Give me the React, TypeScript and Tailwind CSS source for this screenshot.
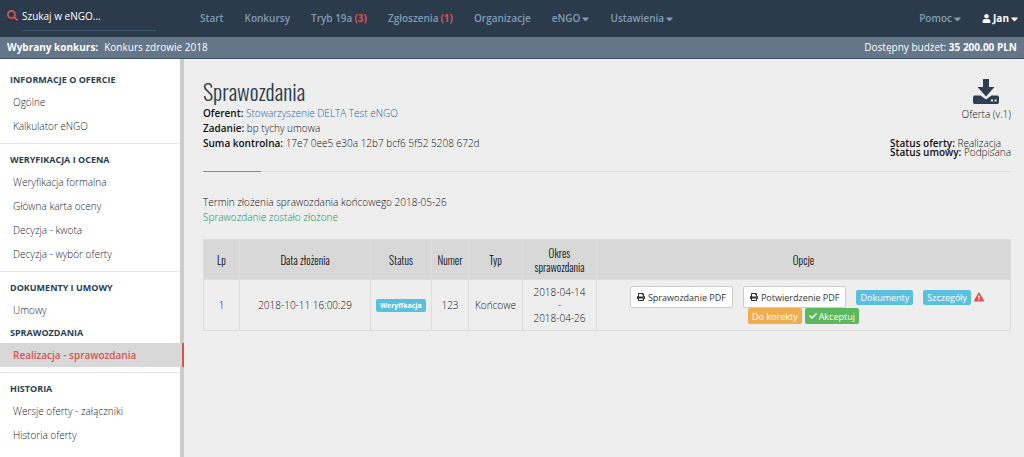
import { FaSearch, FaPrint, FaCheck, FaUser, FaCaretDown, FaExclamationTriangle } from 'react-icons/fa';

const navItems = [
  { label: 'Start' },
  { label: 'Konkursy' },
  { label: 'Tryb 19a', count: 3 },
  { label: 'Zgłoszenia', count: 1 },
  { label: 'Organizacje' },
  { label: 'eNGO', dropdown: true },
  { label: 'Ustawienia', dropdown: true }
];

const sidebarSections = [
  {
    groups: [{ title: 'Informacje o ofercie', items: ['Ogólne', 'Kalkulator eNGO'] }]
  },
  {
    groups: [
      {
        title: 'Weryfikacja i ocena',
        items: ['Weryfikacja formalna', 'Główna karta oceny', 'Decyzja - kwota', 'Decyzja - wybór oferty']
      }
    ]
  },
  {
    groups: [
      { title: 'Dokumenty i umowy', items: ['Umowy'] },
      { title: 'Sprawozdania', items: ['Realizacja - sprawozdania'] }
    ]
  },
  {
    groups: [{ title: 'Historia', items: ['Wersje oferty - załączniki', 'Historia oferty'] }]
  }
];

const activeItem = 'Realizacja - sprawozdania';

const reports = [
  {
    lp: 1,
    submitted: '2018-10-11 16:00:29',
    status: 'Weryfikacja',
    number: 123,
    type: 'Końcowe',
    from: '2018-04-14',
    to: '2018-04-26'
  }
];

const DownloadIcon = () => (
  <svg viewBox="0 0 26 25" className="w-[26px] h-[25px]" fill="currentColor" aria-hidden="true">
    <path d="M10 0h6v8h5.500l-8.500 9.500L4.500 8H10z" />
    <path
      fillRule="evenodd"
      d="M1 16.500h6.500l5.500 4 5.500-4H25L26 18V23.500L25 25H1L0 23.500V18zM18 20.500v2h2v-2zM21.500 20.500v2h2v-2z"
    />
  </svg>
);

const Header = () => (
  <header className="bg-[#2c3b4b] h-[37px] flex items-center">
    <form className="w-[184px] h-full shrink-0 pl-[7px] flex items-center gap-1" role="search">
      <FaSearch className="w-[11px] h-[11px] mb-1.5 text-[#d9534f]" />
      <input
        type="text"
        aria-label="Szukaj"
        placeholder="Szukaj w eNGO..."
        className="w-[134px] h-6 pb-1 text-[10px] font-medium text-white placeholder:text-white placeholder:opacity-100 border-b border-[#3d566e] outline-none"
      />
    </form>
    <nav className="flex-1 flex items-center pl-4 pr-[6px] gap-[21px] text-[10px] font-semibold text-[#7f9bb5]">
      {navItems.map((item) => (
        <a key={item.label} href="#" className="flex items-center gap-0.5 whitespace-nowrap">
          {item.label}
          {item.count && <span className="text-[#d9534f] font-bold">({item.count})</span>}
          {item.dropdown && <FaCaretDown className="w-[7px] h-3" />}
        </a>
      ))}
      <a href="#" className="ml-auto flex items-center gap-0.5">
        Pomoc
        <FaCaretDown className="w-[7px] h-3" />
      </a>
      <a href="#" className="flex items-center gap-0.5 text-white font-bold">
        <FaUser className="w-[9px] h-[9px]" />
        Jan
        <FaCaretDown className="w-[7px] h-3" />
      </a>
    </nav>
  </header>
);

const Sidebar = () => (
  <aside className="w-[184px] shrink-0 bg-white border-r-4 border-[#cccccc] pt-[5px]">
    {sidebarSections.map((section, index) => (
      <div key={index} className="pt-[5px] pb-[5px] border-b border-[#e5e5e5] last:border-b-0">
        {section.groups.map((group) => (
          <div key={group.title}>
            <h2 className="h-[21px] pl-[10px] flex items-center text-[9px] font-bold uppercase text-[#2c3e50]">
              {group.title}
            </h2>
            <ul>
              {group.items.map((item) => (
                <li key={item}>
                  <a
                    href="#"
                    className={
                      item === activeItem
                        ? 'h-6 pl-[13px] -mr-1 flex items-center bg-[#d8d8d8] border-r-2 border-[#d9534f] font-semibold text-[#d9534f]'
                        : 'h-6 pl-[13px] flex items-center text-[#1a242e]'
                    }
                  >
                    {item}
                  </a>
                </li>
              ))}
            </ul>
          </div>
        ))}
      </div>
    ))}
  </aside>
);

const ReportsTable = () => (
  <table className="w-full table-fixed border-collapse border border-[#dddddd] text-center">
    <colgroup>
      <col className="w-9" />
      <col className="w-[131px]" />
      <col className="w-[61px]" />
      <col className="w-[37px]" />
      <col className="w-[54px]" />
      <col className="w-[74px]" />
      <col />
    </colgroup>
    <thead className="bg-[#d8d8d8] font-['Oswald','Liberation_Sans_Narrow',sans-serif] leading-[14px]">
      <tr className="h-10">
        {['Lp', 'Data złożenia', 'Status', 'Numer', 'Typ', 'Okres sprawozdania', 'Opcje'].map((label) => (
          <th key={label} scope="col" className="px-1 text-[11px] font-light border-r border-[#dddddd]">
            {label}
          </th>
        ))}
      </tr>
    </thead>
    <tbody>
      {reports.map((report) => (
        <tr key={report.lp} className="h-[51px] leading-[13px] *:border *:border-[#dddddd]">
          <td>{report.lp}</td>
          <td>{report.submitted}</td>
          <td>
            <span className="inline-block px-1 rounded-xs bg-[#5bc0de] text-[7px] font-bold text-white">
              {report.status}
            </span>
          </td>
          <td>{report.number}</td>
          <td>{report.type}</td>
          <td>
            {report.from}
            <br />-<br />
            {report.to}
          </td>
          <td className="text-[9px] font-normal">
            <div className="flex items-center justify-center gap-[10px] pl-[7px]">
              <button className="h-[22px] px-[6px] flex items-center gap-[3px] rounded-xs border border-[#cccccc] bg-white text-[#333333]">
                <FaPrint className="w-2 h-2" />
                Sprawozdanie PDF
              </button>
              <button className="h-[22px] px-[6px] flex items-center gap-[3px] rounded-xs border border-[#cccccc] bg-white text-[#333333]">
                <FaPrint className="w-2 h-2" />
                Potwierdzenie PDF
              </button>
              <button className="h-[15px] px-1 flex items-center rounded-xs bg-[#5bc0de] text-white">Dokumenty</button>
              <div className="flex items-center gap-[3px]">
                <button className="h-[15px] px-1 flex items-center rounded-xs bg-[#5bc0de] text-white">Szczegóły</button>
                <FaExclamationTriangle className="w-[10px] h-[10px] text-[#d9534f]" />
              </div>
            </div>
            <div className="flex justify-center gap-[3px]">
              <button className="h-4 px-1 flex items-center rounded-xs bg-[#f0ad4e] text-white">Do korekty</button>
              <button className="h-4 px-1 flex items-center gap-0.5 rounded-xs bg-[#5cb85c] text-white">
                <FaCheck className="w-2 h-2" />
                Akceptuj
              </button>
            </div>
          </td>
        </tr>
      ))}
    </tbody>
  </table>
);

const App = () => {
  return (
    <div className="min-h-screen flex flex-col bg-[#eeeeee] font-['Open_Sans',sans-serif] text-[10px] font-light text-[#111111]">
      <Header />
      <div className="h-[22px] px-[7px] flex items-center justify-between bg-[#647687] border-b border-[#3f5060] text-white">
        <p className="flex gap-[6px]">
          <strong className="font-bold">Wybrany konkurs:</strong>
          <span className="font-normal">Konkurs zdrowie 2018</span>
        </p>
        <p className="font-normal">
          Dostępny budżet: <strong className="font-bold">35 200.00 PLN</strong>
        </p>
      </div>

      <div className="flex-1 flex">
        <Sidebar />
        <main className="flex-1 pl-[19px] pr-[13px] pt-[18px]">
          <div className="flex justify-between">
            <div className="leading-[15px]">
              <h1 className="text-[22px] leading-[29px] font-light text-[#2c3e50] font-['Oswald','Liberation_Sans_Narrow',sans-serif]">
                Sprawozdania
              </h1>
              <p>
                <strong className="font-semibold">Oferent:</strong>{' '}
                <a href="#" className="text-[#1f64a5]">
                  Stowarzyszenie DELTA Test eNGO
                </a>
              </p>
              <p>
                <strong className="font-semibold">Zadanie:</strong> bp tychy umowa
              </p>
              <p>
                <strong className="font-semibold">Suma kontrolna:</strong> 17e7 0ee5 e30a 12b7 bcf6 5f52 5208 672d
              </p>
            </div>
            <div className="flex flex-col items-end pt-[2px]">
              <a href="#" className="flex flex-col items-center gap-[3px] leading-[15px]">
                <span className="text-[#2c3e50]">
                  <DownloadIcon />
                </span>
                Oferta (v.1)
              </a>
              <div className="mt-[17px] leading-[9px]">
                <p>
                  <strong className="font-semibold">Status oferty:</strong> Realizacja
                </p>
                <p>
                  <strong className="font-semibold">Status umowy:</strong> Podpisana
                </p>
              </div>
            </div>
          </div>

          <div className="mt-[14px] border-t border-[#dddddd]">
            <div className="w-[58px] h-px -mt-px bg-[#7b8fa3]" />
          </div>

          <div className="mt-[23px] mb-[14px] leading-[15px]">
            <p>Termin złożenia sprawozdania końcowego 2018-05-26</p>
            <p className="text-[#0f8f58]">Sprawozdanie zostało złożone</p>
          </div>

          <ReportsTable />
        </main>
      </div>
    </div>
  );
};

export default App;
